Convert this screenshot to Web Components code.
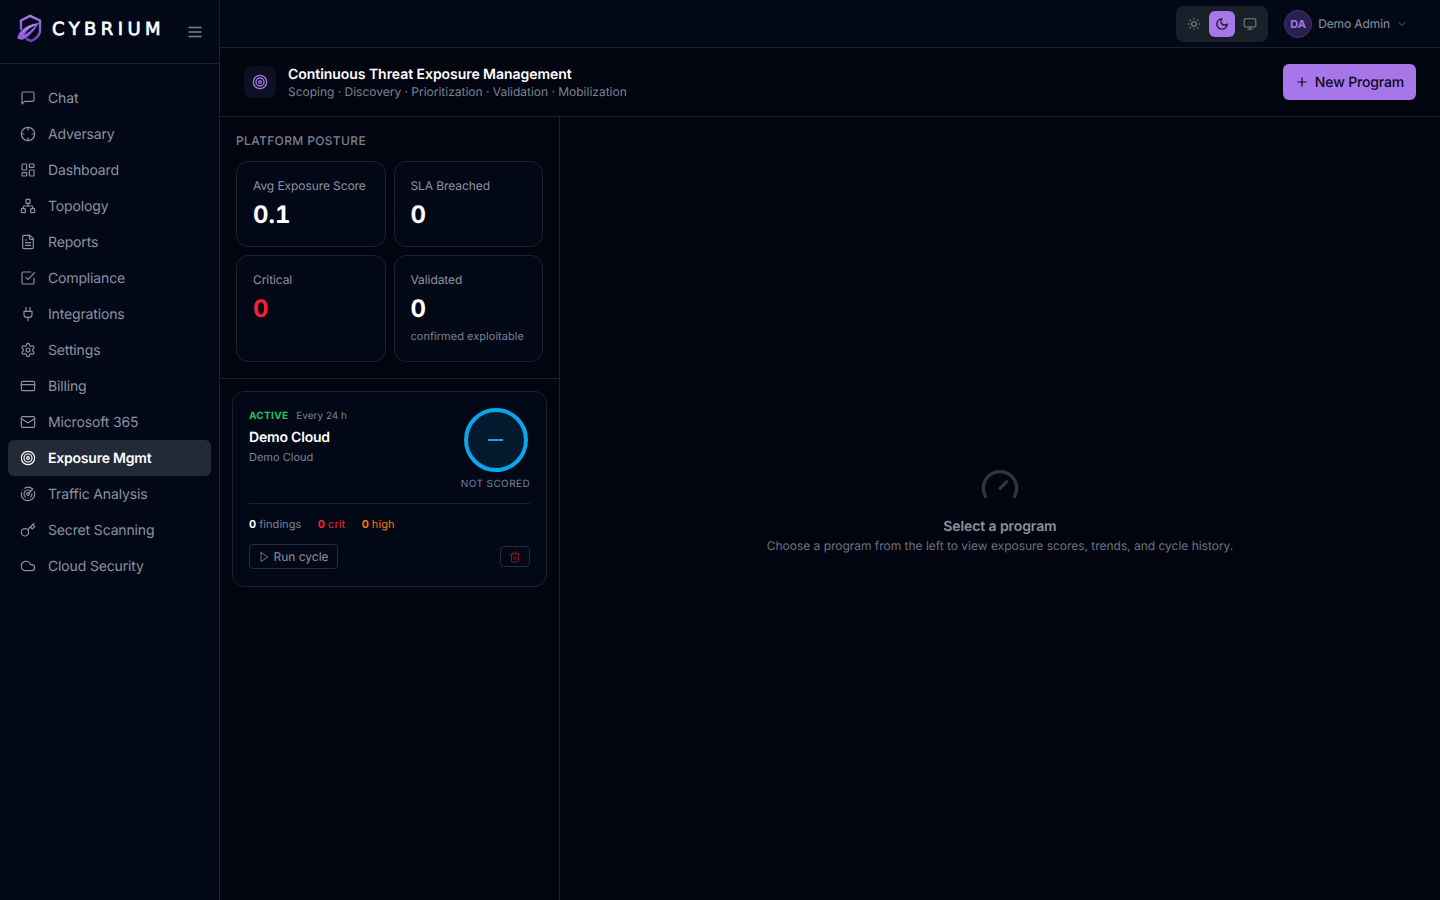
<!DOCTYPE html>
<html lang="en">
<head>
<meta charset="utf-8">
<title>Cybrium - Exposure Management</title>
<style>
  html, body { margin: 0; height: 100%; background: #02040f; }
  body { font-family: Inter, "Noto Sans", sans-serif; overflow: hidden; text-rendering: geometricPrecision; }
</style>
</head>
<body>
<cy-app>
  <cy-sidebar slot="sidebar"></cy-sidebar>
  <cy-topbar slot="topbar"></cy-topbar>
  <cy-page-header slot="header" heading="Continuous Threat Exposure Management" sub="Scoping · Discovery · Prioritization · Validation · Mobilization"></cy-page-header>
  <cy-posture-panel slot="panel">
    <cy-stat-card label="Avg Exposure Score" value="0.1"></cy-stat-card>
    <cy-stat-card label="SLA Breached" value="0"></cy-stat-card>
    <cy-stat-card label="Critical" value="0" tone="critical"></cy-stat-card>
    <cy-stat-card label="Validated" value="0" note="confirmed exploitable"></cy-stat-card>
  </cy-posture-panel>
  <cy-program-card slot="programs" name="Demo Cloud" cloud="Demo Cloud" every="Every 24 h"></cy-program-card>
  <cy-empty-state slot="detail" heading="Select a program" sub="Choose a program from the left to view exposure scores, trends, and cycle history."></cy-empty-state>
</cy-app>

<script>
/**
 * Lucide style icon bodies, drawn on a 24x24 box.
 */
const ICONS = {
  chat: '<path d="M21 15a2 2 0 0 1-2 2H7l-4 4V5a2 2 0 0 1 2-2h14a2 2 0 0 1 2 2z"/>',
  crosshair: '<circle cx="12" cy="12" r="10"/><path d="M22 12h-4M6 12H2M12 6V2M12 22v-4"/>',
  dashboard: '<rect x="3" y="3" width="7" height="9" rx="1"/><rect x="14" y="3" width="7" height="5" rx="1"/><rect x="14" y="12" width="7" height="9" rx="1"/><rect x="3" y="16" width="7" height="5" rx="1"/>',
  network: '<rect x="16" y="16" width="6" height="6" rx="1"/><rect x="2" y="16" width="6" height="6" rx="1"/><rect x="9" y="2" width="6" height="6" rx="1"/><path d="M5 16v-3a1 1 0 0 1 1-1h12a1 1 0 0 1 1 1v3"/><path d="M12 12V8"/>',
  file: '<path d="M15 2H6a2 2 0 0 0-2 2v16a2 2 0 0 0 2 2h12a2 2 0 0 0 2-2V7Z"/><path d="M14 2v4a2 2 0 0 0 2 2h4"/><path d="M10 9H8M16 13H8M16 17H8"/>',
  check: '<path d="m9 11 3 3L22 4"/><path d="M21 12v7a2 2 0 0 1-2 2H5a2 2 0 0 1-2-2V5a2 2 0 0 1 2-2h11"/>',
  plug: '<path d="M12 22v-5M9 8V2M15 8V2"/><path d="M18 8v5a4 4 0 0 1-4 4h-4a4 4 0 0 1-4-4V8Z"/>',
  settings: '<path d="M12.22 2h-.44a2 2 0 0 0-2 2v.18a2 2 0 0 1-1 1.73l-.43.25a2 2 0 0 1-2 0l-.15-.08a2 2 0 0 0-2.73.73l-.22.38a2 2 0 0 0 .73 2.73l.15.1a2 2 0 0 1 1 1.72v.51a2 2 0 0 1-1 1.74l-.15.09a2 2 0 0 0-.73 2.73l.22.38a2 2 0 0 0 2.73.73l.15-.08a2 2 0 0 1 2 0l.43.25a2 2 0 0 1 1 1.73V20a2 2 0 0 0 2 2h.44a2 2 0 0 0 2-2v-.18a2 2 0 0 1 1-1.73l.43-.25a2 2 0 0 1 2 0l.15.08a2 2 0 0 0 2.73-.73l.22-.39a2 2 0 0 0-.73-2.73l-.15-.08a2 2 0 0 1-1-1.74v-.5a2 2 0 0 1 1-1.74l.15-.09a2 2 0 0 0 .73-2.73l-.22-.38a2 2 0 0 0-2.73-.73l-.15.08a2 2 0 0 1-2 0l-.43-.25a2 2 0 0 1-1-1.73V4a2 2 0 0 0-2-2z"/><circle cx="12" cy="12" r="3"/>',
  card: '<rect x="2" y="5" width="20" height="14" rx="2"/><path d="M2 10h20"/>',
  mail: '<rect x="2" y="4" width="20" height="16" rx="2"/><path d="m22 7-8.97 5.7a1.94 1.94 0 0 1-2.06 0L2 7"/>',
  target: '<circle cx="12" cy="12" r="10"/><circle cx="12" cy="12" r="6"/><circle cx="12" cy="12" r="2"/>',
  radar: '<path d="M19.07 4.93A10 10 0 0 0 6.99 3.34"/><path d="M4 6h.01"/><path d="M2.29 9.62A10 10 0 1 0 21.31 8.35"/><path d="M16.24 7.76A6 6 0 1 0 8.23 16.67"/><path d="M12 18h.01"/><path d="M17.99 11.66A6 6 0 0 1 15.77 16.67"/><circle cx="12" cy="12" r="2"/><path d="m13.41 10.59 5.66-5.66"/>',
  key: '<circle cx="7.5" cy="15.5" r="5.5"/><path d="m21 2-9.6 9.6"/><path d="m15.5 7.5 3 3L22 7l-3-3"/>',
  cloud: '<path d="M17.5 19H9a7 7 0 1 1 6.71-9h1.79a4.5 4.5 0 1 1 0 9Z"/>',
  sun: '<circle cx="12" cy="12" r="4"/><path d="M12 2v2M12 20v2M4.93 4.93l1.41 1.41M17.66 17.66l1.41 1.41M2 12h2M20 12h2M6.34 17.66l-1.41 1.41M19.07 4.93l-1.41 1.41"/>',
  moon: '<path d="M12 3a6 6 0 0 0 9 9 9 9 0 1 1-9-9Z"/>',
  monitor: '<rect x="2" y="3" width="20" height="14" rx="2"/><path d="M8 21h8M12 17v4"/>',
  chevron: '<path d="m6 9 6 6 6-6"/>',
  menu: '<path d="M4 6h16M4 12h16M4 18h16"/>',
  plus: '<path d="M5 12h14M12 5v14"/>',
  play: '<polygon points="6 3 20 12 6 21 6 3"/>',
  trash: '<path d="M3 6h18"/><path d="M19 6v14c0 1-1 2-2 2H7c-1 0-2-1-2-2V6"/><path d="M8 6V4c0-1 1-2 2-2h4c1 0 2 1 2 2v2"/><path d="M10 11v6M14 11v6"/>',
  gauge: '<path d="m12 14 4-4"/><path d="M3.34 19a10 10 0 1 1 17.32 0"/>',
};

/**
 * Small icon element, <cy-icon name="chat" size="16"></cy-icon>
 */
class CyIcon extends HTMLElement {
  constructor() {
    super();
    this.attachShadow({ mode: 'open' });
  }

  connectedCallback() {
    const size = this.getAttribute('size') || '16';
    const stroke = this.getAttribute('stroke') || '2';
    const name = this.getAttribute('name');
    this.shadowRoot.innerHTML = `
      <style>
        :host { display: inline-flex; width: ${size}px; height: ${size}px; flex: none; }
        svg { width: 100%; height: 100%; display: block; }
      </style>
      <svg viewBox="0 0 24 24" fill="none" stroke="currentColor" stroke-width="${stroke}" stroke-linecap="round" stroke-linejoin="round">${ICONS[name] || ''}</svg>
    `;
  }
}

/**
 * Page frame, sidebar at the left and the stacked main area at the right.
 */
class CyApp extends HTMLElement {
  constructor() {
    super();
    this.attachShadow({ mode: 'open' });
    this.shadowRoot.innerHTML = `
      <style>
        :host { display: grid; grid-template-columns: 220px 1fr; height: 900px; background: #02040f; }
        .main { display: flex; flex-direction: column; min-width: 0; }
        .split { flex: 1; display: grid; grid-template-columns: 340px 1fr; min-height: 0; }
        .left { border-right: 1px solid #1c2130; display: flex; flex-direction: column; }
        .list { padding: 12px; }
      </style>
      <slot name="sidebar"></slot>
      <div class="main">
        <slot name="topbar"></slot>
        <slot name="header"></slot>
        <div class="split">
          <div class="left">
            <slot name="panel"></slot>
            <div class="list"><slot name="programs"></slot></div>
          </div>
          <slot name="detail"></slot>
        </div>
      </div>
    `;
  }
}

/**
 * Left navigation with the logo at the top.
 */
class CySidebar extends HTMLElement {
  constructor() {
    super();
    this.attachShadow({ mode: 'open' });
  }

  connectedCallback() {
    const items = [
      ['chat', 'Chat'], ['crosshair', 'Adversary'], ['dashboard', 'Dashboard'],
      ['network', 'Topology'], ['file', 'Reports'], ['check', 'Compliance'],
      ['plug', 'Integrations'], ['settings', 'Settings'], ['card', 'Billing'],
      ['mail', 'Microsoft 365'], ['target', 'Exposure Mgmt'], ['radar', 'Traffic Analysis'],
      ['key', 'Secret Scanning'], ['cloud', 'Cloud Security'],
    ];
    const rows = items.map(([icon, label]) => `
      <a class="item ${label === 'Exposure Mgmt' ? 'active' : ''}">
        <cy-icon name="${icon}" size="16" stroke="1.75"></cy-icon><span>${label}</span>
      </a>`).join('');

    this.shadowRoot.innerHTML = `
      <style>
        :host { display: flex; flex-direction: column; background: #030817; border-right: 1px solid #1c2130; }
        .brand { height: 63px; border-bottom: 1px solid #1c2130; display: flex; align-items: center; padding: 0 15px 0 16px; flex: none; }
        .brand svg { width: 28px; height: 30px; flex: none; margin-top: -5px; }
        .word { margin-left: 8px; margin-top: -4px; font: 400 18px/20px "DejaVu Sans", sans-serif; letter-spacing: 4.4px; -webkit-text-stroke: 0.7px #fff; color: #fff; white-space: nowrap; }
        .burger { margin-left: auto; margin-top: 1px; color: #7b8291; }
        nav { padding: 16px 8px; display: flex; flex-direction: column; }
        .item { height: 36px; display: flex; align-items: center; gap: 12px; padding: 0 12px; border-radius: 6px; color: #8b92a1; font-size: 14px; font-weight: 400; letter-spacing: -0.15px; }
        .item span { line-height: 20px; padding-top: 2px; }
        .item.active { background: #222a37; color: #fff; font-weight: 600; letter-spacing: -0.22px; }
      </style>
      <div class="brand">
        <svg viewBox="0 0 28 30" aria-hidden="true">
          <defs>
            <linearGradient id="lg" x1="0" y1="0" x2="0" y2="1">
              <stop offset="0" stop-color="#a67be8"/><stop offset="1" stop-color="#6b3fc4"/>
            </linearGradient>
          </defs>
          <path d="M5 16V6.500L14 1.900l10 4.600V18q-2 6-8.500 9L10 25" fill="none" stroke="url(#lg)" stroke-width="2.4" stroke-linejoin="round"/>
          <path d="M23 9Q10 10 4 18q-3 4-2.500 6.500Q6 27 10 24q7-5 13-15Z" fill="#8f62e0"/>
          <path d="M23 9Q11 11 5 20q5-6 18-11Z" fill="#c3a5f5"/>
          <path d="M20 11.500Q12 14 8 21q6-3 12-9.500Z" fill="#030817"/>
        </svg>
        <span class="word">CYBRIUM</span>
        <cy-icon class="burger" name="menu" size="18"></cy-icon>
      </div>
      <nav>${rows}</nav>
    `;
  }
}

/**
 * Top bar with the theme switch and the user menu.
 */
class CyTopbar extends HTMLElement {
  constructor() {
    super();
    this.attachShadow({ mode: 'open' });
    this.shadowRoot.innerHTML = `
      <style>
        :host { display: flex; align-items: center; justify-content: flex-end; height: 47px; background: #030817; border-bottom: 1px solid #1c2130; padding-right: 32px; gap: 16px; }
        .theme { display: flex; gap: 2px; padding: 5px; background: #1a2029; border-radius: 8px; height: 26px; align-items: center; width: 82px; }
        .theme div { width: 26px; height: 26px; display: grid; place-items: center; border-radius: 6px; color: #7b8291; }
        .theme .on { background: #a776e8; color: #0c0a1c; }
        .user { display: flex; align-items: center; color: #8b92a1; font-size: 12px; font-weight: 400; gap: 6px; letter-spacing: -0.1px; }
        .avatar { box-sizing: border-box; width: 28px; height: 28px; border-radius: 50%; background: #2a1f4d; border: 1px solid #43366e; color: #a776e8; font-size: 11px; font-weight: 700; letter-spacing: 0; display: grid; place-items: center; }
        .user cy-icon { color: #6b7280; }
      </style>
      <div class="theme">
        <div><cy-icon name="sun" size="14" stroke="1.75"></cy-icon></div>
        <div class="on"><cy-icon name="moon" size="14" stroke="2"></cy-icon></div>
        <div><cy-icon name="monitor" size="14" stroke="1.75"></cy-icon></div>
      </div>
      <div class="user">
        <div class="avatar">DA</div>
        <span>Demo Admin</span>
        <cy-icon name="chevron" size="12" stroke="1.75"></cy-icon>
      </div>
    `;
  }
}

/**
 * Title row of the page, with the main action at the right.
 */
class CyPageHeader extends HTMLElement {
  constructor() {
    super();
    this.attachShadow({ mode: 'open' });
  }

  connectedCallback() {
    this.shadowRoot.innerHTML = `
      <style>
        :host { display: flex; align-items: center; height: 68px; padding: 0 24px; border-bottom: 1px solid #1c2130; background: #02040f; }
        .tile { width: 32px; height: 32px; border-radius: 8px; background: #0d1020; color: #a776e8; display: grid; place-items: center; margin-right: 12px; }
        h1 { margin: 2px 0 0; font-size: 14px; line-height: 18px; font-weight: 600; color: #fff; letter-spacing: -0.05px; }
        p { margin: 0; font-size: 12px; line-height: 16px; color: #7b8291; letter-spacing: -0.01px; }
        button { margin-left: auto; height: 36px; width: 133px; border: 0; border-radius: 6px; background: #a776e8; color: #0c0a1c; font: 500 14px Inter, sans-serif; letter-spacing: -0.15px; text-rendering: geometricPrecision; display: flex; align-items: center; justify-content: center; gap: 6px; padding: 0; }
      </style>
      <div class="tile"><cy-icon name="target" size="16"></cy-icon></div>
      <div>
        <h1>${this.getAttribute('heading')}</h1>
        <p>${this.getAttribute('sub')}</p>
      </div>
      <button><cy-icon name="plus" size="14"></cy-icon>New Program</button>
    `;
  }
}

/**
 * Section with the heading and the grid of stat cards passed in the slot.
 */
class CyPosturePanel extends HTMLElement {
  constructor() {
    super();
    this.attachShadow({ mode: 'open' });
    this.shadowRoot.innerHTML = `
      <style>
        :host { display: block; padding: 16px; border-bottom: 1px solid #1c2130; }
        h2 { margin: 0 0 12px; font-size: 12px; line-height: 16px; font-weight: 500; letter-spacing: 0.35px; color: #7b8291; }
        .grid { display: grid; grid-template-columns: 1fr 1fr; gap: 8px; }
      </style>
      <h2>PLATFORM POSTURE</h2>
      <div class="grid"><slot></slot></div>
    `;
  }
}

/**
 * One number with a label, an optional note under it.
 */
class CyStatCard extends HTMLElement {
  constructor() {
    super();
    this.attachShadow({ mode: 'open' });
  }

  connectedCallback() {
    const note = this.getAttribute('note');
    const color = this.getAttribute('tone') === 'critical' ? '#ff1f35' : '#fff';
    this.shadowRoot.innerHTML = `
      <style>
        :host { display: block; box-sizing: border-box; padding: 16px 16px 15px; border: 1px solid #1c2130; border-radius: 12px; background: #030817; }
        .label { font-size: 12px; line-height: 16px; color: #8b92a1; letter-spacing: -0.08px; }
        .value { font-size: 24px; line-height: 32px; font-weight: 700; color: ${color}; margin-top: 5px; font-variant-numeric: tabular-nums; }
        .note { font-size: 11px; line-height: 16px; color: #7b8291; margin: 3px 0 2px; letter-spacing: 0.03px; }
      </style>
      <div class="label">${this.getAttribute('label')}</div>
      <div class="value">${this.getAttribute('value')}</div>
      ${note ? `<div class="note">${note}</div>` : ''}
    `;
  }
}

/**
 * Program summary card, with the score ring and the actions.
 */
class CyProgramCard extends HTMLElement {
  constructor() {
    super();
    this.attachShadow({ mode: 'open' });
  }

  connectedCallback() {
    this.shadowRoot.innerHTML = `
      <style>
        :host { display: block; box-sizing: border-box; width: 315px; height: 196px; padding: 16px; border: 1px solid #1c2130; border-radius: 12px; background: #030817; }
        .top { display: flex; justify-content: space-between; height: 95px; border-bottom: 1px solid #1c2130; }
        .meta { display: flex; align-items: center; gap: 8px; margin-top: 1px; font-size: 10px; line-height: 14px; color: #7b8291; }
        .active { color: #1fc45e; font-weight: 700; letter-spacing: 0.3px; }
        h3 { margin: 5px 0 0; font-size: 14px; line-height: 20px; font-weight: 600; color: #fff; letter-spacing: -0.2px; }
        .cloud { margin-top: 1px; font-size: 11px; line-height: 16px; color: #7b8291; }
        .score { display: flex; flex-direction: column; align-items: center; }
        .ring { box-sizing: border-box; width: 64px; height: 64px; border: 4px solid #0ba5e9; border-radius: 50%; background: #031a2e; display: grid; place-items: center; align-self: flex-end; margin-right: 2px; }
        .ring i { display: block; width: 15px; height: 2px; background: #0ba5e9; margin-right: 1px; }
        .cap { margin-top: 5px; font-size: 10px; line-height: 14px; letter-spacing: 0.4px; color: #7b8291; white-space: nowrap; }
        .counts { display: flex; gap: 16.5px; margin-top: 12px; font-size: 11px; line-height: 16px; color: #7b8291; font-variant-numeric: tabular-nums; letter-spacing: 0.06px; }
        .counts b { font-weight: 700; color: #fff; }
        .crit, .crit b { color: #ff1f35; }
        .high, .high b { color: #f97316; }
        .actions { display: flex; justify-content: space-between; align-items: center; margin-top: 12px; }
        .run { box-sizing: border-box; height: 25px; width: 89px; display: flex; align-items: center; justify-content: center; gap: 3px; border: 1px solid #262c3a; border-radius: 4px; color: #8b92a1; font-size: 12px; }
        .del { box-sizing: border-box; width: 30px; height: 21px; display: grid; place-items: center; border: 1px solid #262c3a; border-radius: 4px; color: #7a1b27; }
      </style>
      <div class="top">
        <div>
          <div class="meta"><span class="active">ACTIVE</span><span>${this.getAttribute('every')}</span></div>
          <h3>${this.getAttribute('name')}</h3>
          <div class="cloud">${this.getAttribute('cloud')}</div>
        </div>
        <div class="score">
          <div class="ring"><i></i></div>
          <div class="cap">NOT SCORED</div>
        </div>
      </div>
      <div class="counts">
        <span><b>0</b> findings</span>
        <span class="crit"><b>0</b> crit</span>
        <span class="high"><b>0</b> high</span>
      </div>
      <div class="actions">
        <div class="run"><cy-icon name="play" size="12" stroke="1.5"></cy-icon>Run cycle</div>
        <div class="del"><cy-icon name="trash" size="12" stroke="2"></cy-icon></div>
      </div>
    `;
  }
}

/**
 * Placeholder shown when no program is selected.
 */
class CyEmptyState extends HTMLElement {
  constructor() {
    super();
    this.attachShadow({ mode: 'open' });
  }

  connectedCallback() {
    this.shadowRoot.innerHTML = `
      <style>
        :host { display: flex; flex-direction: column; align-items: center; justify-content: center; text-align: center; padding-top: 1px; }
        cy-icon { color: #2f3541; margin-bottom: 12px; }
        h4 { margin: 0; font-size: 14px; line-height: 20px; font-weight: 600; color: #8b92a1; letter-spacing: -0.1px; }
        p { margin: 1px 0 0; font-size: 12px; line-height: 16px; color: #6b7280; letter-spacing: -0.02px; }
      </style>
      <cy-icon name="gauge" size="40" stroke="2"></cy-icon>
      <h4>${this.getAttribute('heading')}</h4>
      <p>${this.getAttribute('sub')}</p>
    `;
  }
}

customElements.define('cy-icon', CyIcon);
customElements.define('cy-app', CyApp);
customElements.define('cy-sidebar', CySidebar);
customElements.define('cy-topbar', CyTopbar);
customElements.define('cy-page-header', CyPageHeader);
customElements.define('cy-posture-panel', CyPosturePanel);
customElements.define('cy-stat-card', CyStatCard);
customElements.define('cy-program-card', CyProgramCard);
customElements.define('cy-empty-state', CyEmptyState);
</script>
</body>
</html>
